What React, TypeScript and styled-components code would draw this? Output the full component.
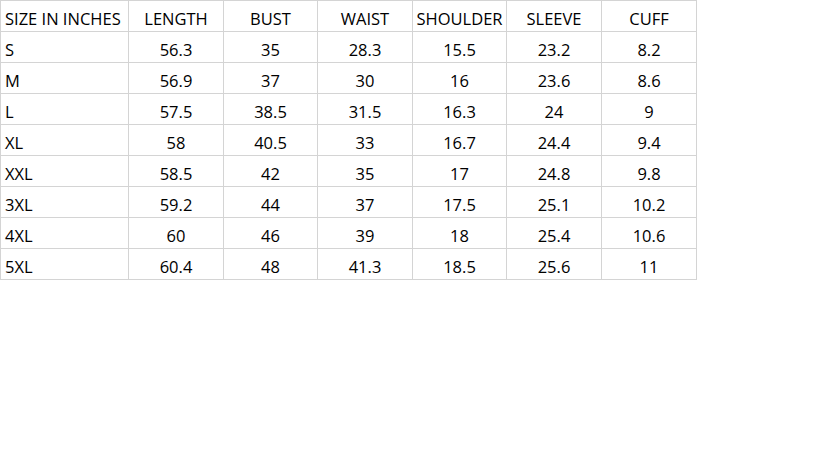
import React from "react";
import styled, { createGlobalStyle } from "styled-components";

const Global = createGlobalStyle`
  html, body { margin: 0; padding: 0; background: #ffffff; }
  body { font-family: "Open Sans", "Liberation Sans", Arial, sans-serif; }
`;

const Page = styled.div`
  width: 819px;
  height: 460px;
  background: #ffffff;
`;

const Sheet = styled.div`
  display: inline-grid;
  grid-template-columns: 127px 94px 93px 94px 93px 94px 94px;
  grid-auto-rows: 30px;
  gap: 1px;
  padding: 1px;
  background: #d4d4d4;
`;

const Cell = styled.div<{ $align: "left" | "center" }>`
  background: #ffffff;
  display: flex;
  align-items: flex-end;
  justify-content: ${(p) => (p.$align === "left" ? "flex-start" : "center")};
  padding: ${(p) => (p.$align === "left" ? "0 2px 4px 4px" : "0 2px 4px 2px")};
  font-family: "Open Sans", "Liberation Sans", Arial, sans-serif;
  font-size: 16.5px;
  line-height: 1;
  color: #000000;
  white-space: nowrap;
`;

const headers = ["SIZE IN INCHES", "LENGTH", "BUST", "WAIST", "SHOULDER", "SLEEVE", "CUFF"];

const rows: string[][] = [
  ["S", "56.3", "35", "28.3", "15.5", "23.2", "8.2"],
  ["M", "56.9", "37", "30", "16", "23.6", "8.6"],
  ["L", "57.5", "38.5", "31.5", "16.3", "24", "9"],
  ["XL", "58", "40.5", "33", "16.7", "24.4", "9.4"],
  ["XXL", "58.5", "42", "35", "17", "24.8", "9.8"],
  ["3XL", "59.2", "44", "37", "17.5", "25.1", "10.2"],
  ["4XL", "60", "46", "39", "18", "25.4", "10.6"],
  ["5XL", "60.4", "48", "41.3", "18.5", "25.6", "11"],
];

export default function App() {
  return (
    <Page>
      <Global />
      <Sheet>
        {headers.map((h, i) => (
          <Cell key={"h" + i} $align={i === 0 ? "left" : "center"}>
            {h}
          </Cell>
        ))}
        {rows.map((r, ri) =>
          r.map((v, ci) => (
            <Cell key={ri + "-" + ci} $align={ci === 0 ? "left" : "center"}>
              {v}
            </Cell>
          ))
        )}
      </Sheet>
    </Page>
  );
}
